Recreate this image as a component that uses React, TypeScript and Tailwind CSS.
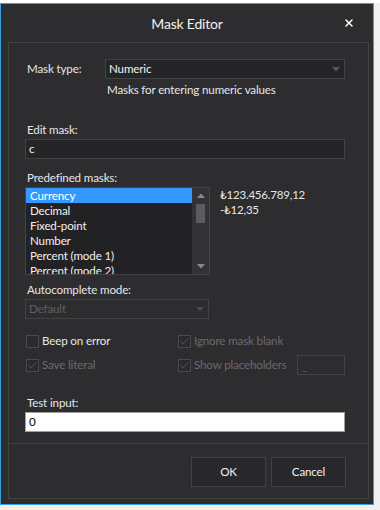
import { Check, X } from "lucide-react";

const items = ["Currency", "Decimal", "Fixed-point", "Number", "Percent (mode 1)", "Percent (mode 2)"];

const Caret = ({ color }: { color: string }) => (
  <svg width="8" height="5" viewBox="0 0 8 5" aria-hidden="true">
    <path d="M0 0 L8 0 L4 4.5 Z" fill={color} />
  </svg>
);

const CheckBox = ({ checked, disabled, label }: { checked?: boolean; disabled?: boolean; label: string }) => (
  <div className="flex items-center h-[16px] whitespace-nowrap">
    <div className="w-[13px] h-[13px] border border-[#4a4a4f] bg-[#2a2a2d] flex items-center justify-center">
      {checked && <Check className="w-[11px] h-[11px] text-[#5f5f63]" strokeWidth={2} />}
    </div>
    <span className={`ml-[3px] ${disabled ? "text-[#6a6a6e]" : "text-[#e6e6e6]"}`}>{label}</span>
  </div>
);

const Label = ({ children }: { children: React.ReactNode }) => (
  <div className="h-[16px] leading-[16px] pl-[2px] text-[#e6e6e6]">{children}</div>
);

export default function App() {
  return (
    <div className="w-[380px] h-[510px] bg-[#f0f0f0] overflow-hidden font-['Lato','Noto_Sans',sans-serif] text-[11.6px] tracking-[-0.15px]">
      <div className="h-[3px] bg-white" />
      <div className="w-[374px] h-[502px] border border-[#3a9fdd] bg-[#2d2d30] flex flex-col">
        {/* title bar */}
        <div className="h-[38px] flex items-center relative">
          <div className="flex-1 text-center text-[14px] tracking-[-0.2px] text-[#f1f1f1]">Mask Editor</div>
          <X className="absolute right-[18px] top-[13px] w-[12px] h-[12px] text-white" strokeWidth={3} />
        </div>

        <div className="ml-[7px] mr-[4px] mb-[5px] flex-1 border border-[#434346] flex flex-col">
          <div className="h-[400px] pl-[16px] pt-[16px]">
            <div className="w-[320px]">
              <div className="flex h-[20px] items-center">
                <div className="w-[80px] pl-[2px] text-[#e6e6e6]">Mask type:</div>
                <div className="w-[240px] h-[20px] border border-[#434346] bg-[#252528] flex items-center justify-between pl-[3px] pr-[4px] text-[#f1f1f1]">
                  <span>Numeric</span>
                  <Caret color="#5a5a5e" />
                </div>
              </div>
              <div className="mt-[3px] h-[16px] leading-[16px] ml-[82px] text-[#e6e6e6]">Masks for entering numeric values</div>

              <div className="mt-[24px]">
                <Label>Edit mask:</Label>
              </div>
              <div className="mt-[1px] h-[20px] border border-[#434346] bg-[#252528] flex items-center pl-[3px] text-[#f1f1f1]">c</div>

              <div className="mt-[11px]">
                <Label>Predefined masks:</Label>
              </div>
              <div className="mt-[1px] flex">
                <div className="w-[185px] h-[88px] border border-[#434346] bg-[#222225] flex">
                  <div className="w-[166px] overflow-hidden">
                    {items.map((it, i) => (
                      <div
                        key={it}
                        className={`h-[15px] leading-[15px] pl-[4px] whitespace-nowrap ${i === 0 ? "bg-[#3399ff] text-white" : "text-[#f1f1f1]"}`}
                      >
                        {it}
                      </div>
                    ))}
                  </div>
                  <div className="w-[17px] bg-[#333337] flex flex-col items-center pt-[5px] pb-[5px]">
                    <div className="rotate-180">
                      <Caret color="#8a8a8e" />
                    </div>
                    <div className="mt-[6px] w-[9px] h-[19px] bg-[#5c5c60]" />
                    <div className="flex-1" />
                    <Caret color="#8a8a8e" />
                  </div>
                </div>
                <div className="ml-[10px] text-[#e6e6e6] leading-[15px] text-[11.5px] tracking-[-0.2px]">
                  <div>₺123.456.789,12</div>
                  <div>-₺12,35</div>
                </div>
              </div>

              <div className="mt-[7px]">
                <Label>Autocomplete mode:</Label>
              </div>
              <div className="mt-[1px] w-[184px] h-[20px] border border-[#434346] flex items-center justify-between pl-[3px] pr-[4px] text-[#5f5f63]">
                <span>Default</span>
                <Caret color="#4a4a4e" />
              </div>

              <div className="mt-[14px] flex pl-[1px]">
                <div className="w-[152px]">
                  <CheckBox label="Beep on error" />
                </div>
                <CheckBox checked disabled label="Ignore mask blank" />
              </div>
              <div className="mt-[6px] flex items-center pl-[1px]">
                <div className="w-[152px]">
                  <CheckBox checked disabled label="Save literal" />
                </div>
                <div className="w-[119px]">
                  <CheckBox checked disabled label="Show placeholders" />
                </div>
                <div className="w-[48px] h-[20px] border border-[#434346] flex items-end pl-[4px] pb-[2px] text-[#5f5f63] leading-[12px]">_</div>
              </div>

              <div className="mt-[20px]">
                <Label>Test input:</Label>
              </div>
              <div className="mt-[1px] h-[20px] border border-[#a0a0a0] bg-white flex items-center pl-[3px] text-black">0</div>
            </div>
          </div>

          <div className="h-px bg-[#434346]" />

          <div className="flex-1 flex justify-end pr-[22px] pt-[13px] gap-[5px]">
            <button className="w-[75px] h-[30px] border border-[#434346] bg-[#28282b] text-[#f1f1f1]">OK</button>
            <button className="w-[75px] h-[30px] border border-[#434346] bg-[#28282b] text-[#f1f1f1]">Cancel</button>
          </div>
        </div>
      </div>
    </div>
  );
}
